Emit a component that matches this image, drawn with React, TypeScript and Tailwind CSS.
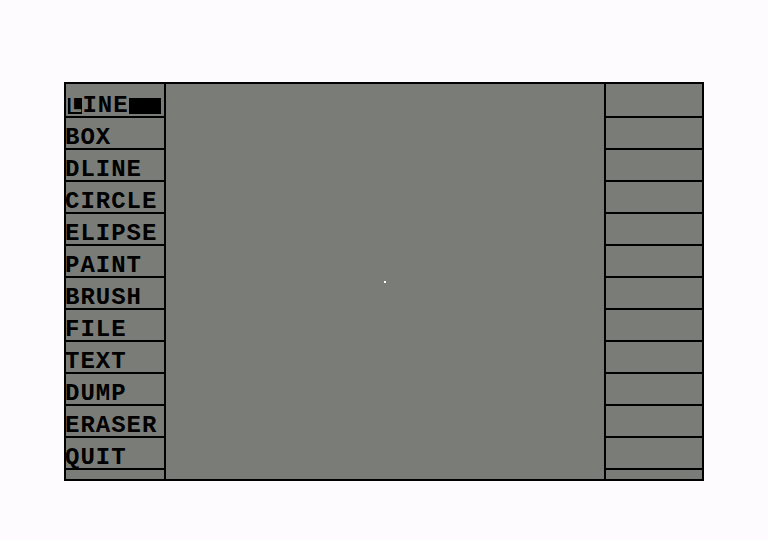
const tools = [
  "LINE",
  "BOX",
  "DLINE",
  "CIRCLE",
  "ELIPSE",
  "PAINT",
  "BRUSH",
  "FILE",
  "TEXT",
  "DUMP",
  "ERASER",
  "QUIT",
];

const App = () => {
  return (
    <div className="w-[768px] h-[540px] bg-[#fdfbfd] pt-[82px] pl-[64px] overflow-hidden">
      <div
        className="w-[640px] h-[399px] border-2 border-black bg-[#7a7c78] flex text-black"
        style={{ fontFamily: '"Liberation Mono", "DejaVu Sans Mono", monospace' }}
      >
        {/* Tool menu */}
        <div className="w-[100px] border-r-2 border-black flex flex-col">
          {tools.map((t, i) => (
            <div
              key={t}
              className={`${i === 0 ? "h-[34px]" : "h-[32px]"} border-b-2 border-black flex items-end overflow-hidden`}
            >
              {i === 0 ? (
                <div className="flex items-center ml-[2px] mb-[2px]">
                  <span className="bg-black text-[#7a7c78] text-[24px] leading-[16px] font-bold">
                    L
                  </span>
                  <span className="text-[24px] leading-[16px] font-bold tracking-[1px]">
                    INE
                  </span>
                  <span className="w-[32px] h-[16px] bg-black" />
                </div>
              ) : (
                <span className="text-[24px] leading-[20px] font-bold tracking-[1px] -ml-[1px]">
                  {t}
                </span>
              )}
            </div>
          ))}
          <div className="flex-1" />
        </div>

        {/* Drawing canvas */}
        <div className="flex-1 flex items-center justify-center">
          <div className="w-[2px] h-[2px] bg-white" />
        </div>

        {/* Side slots */}
        <div className="w-[98px] border-l-2 border-black flex flex-col">
          {tools.map((t, i) => (
            <div
              key={t}
              className={`${i === 0 ? "h-[34px]" : "h-[32px]"} border-b-2 border-black`}
            />
          ))}
          <div className="flex-1" />
        </div>
      </div>
    </div>
  );
};

export default App;
